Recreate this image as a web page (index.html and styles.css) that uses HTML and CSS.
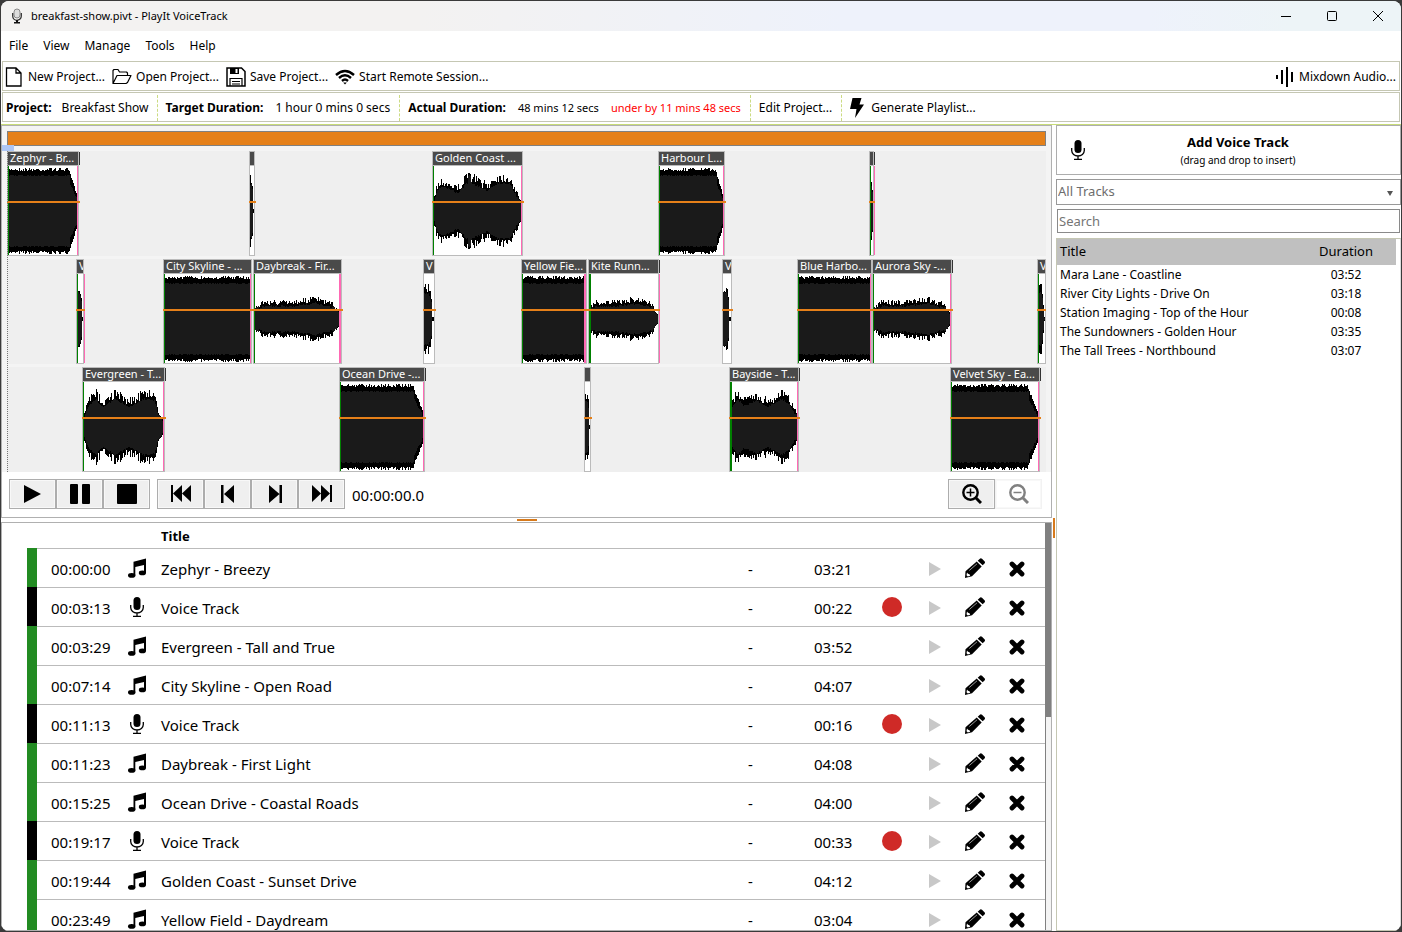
FILE: index.html
```html
<!DOCTYPE html>
<html lang="en">
<head>
<meta charset="utf-8">
<title>breakfast-show.pivt - PlayIt VoiceTrack</title>
<link rel="stylesheet" href="styles.css">
</head>
<body>
<svg class="defs" aria-hidden="true">
  <symbol id="mic" viewBox="0 0 20 20">
    <rect x="6.500" y="0" width="7" height="13" rx="3.500"/>
    <path d="M3.700 8v2.500a6.300 5.500 0 0 0 12.600 0V8M10 16v3M6 19.300h8" fill="none" stroke="currentColor" stroke-width="1.300"/>
  </symbol>
  <symbol id="notes" viewBox="0 0 20 20">
    <path d="M6.500 3.800 19 .600v14.400H17V7L8.300 9V17.500H6.500z"/>
    <ellipse cx="4.700" cy="17.400" rx="3.700" ry="2.300"/>
    <ellipse cx="15.400" cy="14.900" rx="3.600" ry="2.300"/>
  </symbol>
  <symbol id="pencil" viewBox="0 0 20 20">
    <path d="M14.600 1q1.200-1.300 2.400-.200l2.500 2.500q1 1.200 0 2.200l-1.800 1.800-5-4.600z"/>
    <path d="M11.700 3.500l5 4.900L7 18.300 0 20l.500-6.700z"/>
    <path d="M4.300 12.500 12 5.800" fill="none" stroke="#bbb" stroke-width=".8"/>
    <path d="M2 14.500l-.5 2.800 1.300 1.200 2.400-.7-.7-1.600-1.500-.4z" fill="#fff"/>
  </symbol>
  <symbol id="cross" viewBox="0 0 16 16">
    <path d="M3 3l10 10M13 3 3 13" fill="none" stroke="currentColor" stroke-width="4.800" stroke-linecap="round"/>
  </symbol>
  <symbol id="tri" viewBox="0 0 12 14"><path d="M0 0 12 7 0 14z"/></symbol>
</svg>
<div class="window">
  <header class="titlebar">
    <svg class="app-icon" viewBox="0 0 10 16"><rect x="2" y="1" width="6" height="9" rx="3" fill="#ddd" stroke="#888"/><path d="M.700 5v3a4.300 4.300 0 0 0 8.600 0V5" fill="none" stroke="#333" stroke-width="1.300"/><path d="M4 12h2v2h2v1.500H2V14h2z" fill="#111"/></svg>
    <span>breakfast-show.pivt - PlayIt VoiceTrack</span>
    <div class="window-buttons">
      <button aria-label="Minimize"><svg viewBox="0 0 12 12"><path d="M1 6.500h10"/></svg></button>
      <button aria-label="Maximize"><svg viewBox="0 0 12 12"><rect x="1.500" y="1.500" width="9" height="9" rx="1"/></svg></button>
      <button aria-label="Close"><svg viewBox="0 0 12 12"><path d="M1 1l10 10M11 1 1 11"/></svg></button>
    </div>
  </header>
  <nav class="menubar">
    <button>File</button><button>View</button><button>Manage</button><button>Tools</button><button>Help</button>
  </nav>
  <div class="toolbar">
    <button><svg class="ico" viewBox="0 0 20 20"><path d="M2.500 1h9.500l5 5v13h-14.500zM12 1v5h5" fill="none" stroke="#000" stroke-width="1.300"/></svg>New Project...</button>
    <button><svg class="ico" viewBox="0 0 20 20"><path d="M1 16.500V3.500l1-1h4l1.500 2.500h7l1 1v2M1 16.500l4-8h14l-3.500 7-1.500 1z" fill="none" stroke="#000" stroke-width="1.200" stroke-linejoin="round"/></svg>Open Project...</button>
    <button><svg class="ico" viewBox="0 0 20 20"><path d="M1 1h14.500l3.500 3.500V19H1z" fill="none" stroke="#000" stroke-width="1.500"/><path d="M4 1h9v6H4z"/><path d="M9.500 2h2v4h-2z" fill="#fff"/><path d="M4 19v-7.500h12V19M6 14.500h8M6 17h8" fill="none" stroke="#000" stroke-width="1.200"/></svg>Save Project...</button>
    <button><svg class="ico" viewBox="0 0 20 20"><path d="M1 8q9-8 18 0M4 11q6-5.500 12 0M7 14q3-2.800 6 0" fill="none" stroke="#000" stroke-width="2.400"/><path d="M8.200 15.500h3.600L10 17.500z"/></svg>Start Remote Session...</button>
    <button class="push"><svg class="ico" viewBox="0 0 20 20"><path d="M1 8h2v4H1zM6 3h2v14H6zM11 0h2v20h-2zM16 5h2v10h-2z"/></svg>Mixdown Audio...</button>
  </div>
  <div class="toolbar info">
    <div class="cell"><b>Project:</b><span>Breakfast Show</span></div>
    <div class="cell"><b>Target Duration:</b><span>1 hour 0 mins 0 secs</span></div>
    <div class="cell"><b>Actual Duration:</b><span class="small">48 mins 12 secs</span><span class="small under">under by 11 mins 48 secs</span></div>
    <button class="cell">Edit Project...</button>
    <button class="cell gen"><svg class="bolt" viewBox="0 0 14 20"><path d="M2.500 0h9L9.500 6.500H14L5 20l1.500-9H0z"/></svg>Generate Playlist...</button>
  </div>
  <main class="body">
    <section class="left">
      <div class="editor">
        <div class="overview"></div>
        <div class="timeline" id="timeline">
          <div class="lane"></div><div class="lane"></div><div class="lane"></div>
          <div class="playhead"></div>
        </div>
        <div class="transport">
          <div class="group">
            <button aria-label="Play"><svg viewBox="0 0 20 20"><path d="M1 1l17 9L1 19z"/></svg></button>
            <button aria-label="Pause"><svg viewBox="0 0 20 20"><path d="M0 1q0-1 1-1h6q1 0 1 1v18q0 1-1 1H1q-1 0-1-1zM12 1q0-1 1-1h6q1 0 1 1v18q0 1-1 1h-6q-1 0-1-1z"/></svg></button>
            <button aria-label="Stop"><svg viewBox="0 0 20 20"><rect width="20" height="20" rx="1"/></svg></button>
          </div>
          <div class="group">
            <button aria-label="First track"><svg viewBox="0 0 20 20"><path d="M0 1h2v17H0zM11 1v17L2 9.500zM20 1v17l-9-8.500z"/></svg></button>
            <button aria-label="Previous track"><svg viewBox="0 0 20 20"><path d="M3 1h2.500v18H3zM16 1v18L6 10z"/></svg></button>
            <button aria-label="Next track"><svg viewBox="0 0 20 20"><path d="M14.500 1H17v18h-2.500zM4 1l10.500 9L4 19z"/></svg></button>
            <button aria-label="Last track"><svg viewBox="0 0 20 20"><path d="M18 1h2v17h-2zM0 1l9 8.500L0 18zM9 1l9 8.500L9 18z"/></svg></button>
          </div>
          <output class="clock">00:00:00.0</output>
          <div class="group push">
            <button aria-label="Zoom in"><svg viewBox="0 0 20 20"><circle cx="8.500" cy="8.500" r="7.200" fill="none" stroke="currentColor" stroke-width="2.400"/><path d="M4.500 8.500h8M8.500 4.500v8" stroke="currentColor" stroke-width="1.500"/><path d="M14 14l5 5" stroke="currentColor" stroke-width="3"/></svg></button>
            <button aria-label="Zoom out" disabled><svg viewBox="0 0 20 20"><circle cx="8.500" cy="8.500" r="7.200" fill="none" stroke="currentColor" stroke-width="2.400"/><path d="M4.500 8.500h8" stroke="currentColor" stroke-width="1.500"/><path d="M14 14l5 5" stroke="currentColor" stroke-width="3"/></svg></button>
          </div>
        </div>
      </div>
      <div class="splitter-h"><i></i></div>
      <div class="playlist">
        <div class="scroll-area">
          <table class="tracks">
            <colgroup><col class="c-mark"><col class="c-time"><col class="c-icon"><col><col class="c-dash"><col class="c-dur"><col class="c-rec"><col class="c-act"><col class="c-act"><col class="c-del"></colgroup>
            <thead><tr><th></th><th></th><th></th><th scope="col">Title</th><th></th><th></th><th></th><th></th><th></th><th></th></tr></thead>
            <tbody id="rows"></tbody>
          </table>
        </div>
        <div class="scrollbar"><i></i></div>
      </div>
    </section>
    <div class="splitter-v"><i></i></div>
    <aside class="side">
      <button class="add-voice"><svg class="ico" viewBox="0 0 20 20"><use href="#mic"/></svg><span><b>Add Voice Track</b><small>(drag and drop to insert)</small></span></button>
      <label class="combo"><select aria-label="Track filter"><option>All Tracks</option></select><svg viewBox="0 0 6 5"><path d="M0 0h6L3 5z"/></svg></label>
      <input class="search" type="text" placeholder="Search" aria-label="Search">
      <div class="library">
        <table>
          <thead><tr><th scope="col">Title</th><th scope="col" class="dur">Duration</th></tr></thead>
          <tbody>
            <tr><td>Mara Lane - Coastline</td><td class="dur">03:52</td></tr>
            <tr><td>River City Lights - Drive On</td><td class="dur">03:18</td></tr>
            <tr><td>Station Imaging - Top of the Hour</td><td class="dur">00:08</td></tr>
            <tr><td>The Sundowners - Golden Hour</td><td class="dur">03:35</td></tr>
            <tr><td>The Tall Trees - Northbound</td><td class="dur">03:07</td></tr>
          </tbody>
        </table>
      </div>
    </aside>
  </main>
</div>
<script src="app.js"></script>
</body>
</html>
```

FILE: styles.css
```css
* { box-sizing: border-box; }
body {
  margin: 0;
  padding: 1px;
  height: 100vh;
  overflow: hidden;
  background: #3a3a3a;
  color: #000;
  font: 12px/16px "Noto Sans", "Open Sans", sans-serif;
}
button, input, select { font: inherit; color: inherit; margin: 0; }
button { background: none; border: 0; padding: 0; white-space: nowrap; }
svg { display: block; flex: none; }
.defs { display: none; }
.push { margin-left: auto; }

.window {
  height: 100%;
  display: flex;
  flex-direction: column;
  background: #fff;
  border-radius: 8px;
  overflow: hidden;
}
.titlebar {
  height: 30px;
  flex: none;
  display: flex;
  align-items: center;
  padding-left: 11px;
  font-size: 11px;
  background: linear-gradient(90deg, #f3f2f1 0 30%, #eef2fb 60% 82%, #edf4f7 92%);
}
.app-icon { width: 10px; height: 16px; margin-right: 9px; }
.window-buttons { display: flex; margin-left: auto; height: 100%; }
.window-buttons button { width: 46px; display: grid; place-items: center; }
.window-buttons svg { width: 12px; height: 12px; fill: none; stroke: #000; stroke-width: 1; }

.menubar { height: 30px; flex: none; display: flex; align-items: center; gap: 15px; padding: 0 8px; }

.toolbar {
  height: 30px;
  flex: none;
  margin: 0 1px 1px;
  display: flex;
  align-items: center;
  gap: 7px;
  padding: 1px 3px 0 1px;
  border: 1px solid #c5c7b3;
}
.toolbar button { display: flex; align-items: center; gap: 4px; }
.ico { width: 20px; height: 20px; }
.info { gap: 0; padding-left: 3px; margin-bottom: 2px; }
.info .cell { height: 26px; display: flex; align-items: center; gap: 12px; padding: 1px 9px 0 8px; border-right: 1px dashed #cbdb82; }
.info .cell:first-child { gap: 10px; padding: 1px 8px 0 0; }
.info .gen { gap: 7px; border: 0; }
.small { font-size: 11px; }
.under { color: #f00; }
.bolt { width: 14px; height: 20px; }

.body { flex: 1; min-height: 0; display: flex; border-top: 1px solid #c8dc78; }
.left { flex: 1; min-width: 0; display: flex; flex-direction: column; }
.editor { flex: none; border: 1px solid #b0b0b0; background: #f4f4f4; }
.overview { height: 15px; margin: 5px 5px 5px; border: 1px solid #808080; background: #e58019; }
.timeline { position: relative; display: grid; gap: 3px; margin: 0 5px; }
.lane { position: relative; height: 105px; background: #efefef; overflow: hidden; }
.playhead { position: absolute; left: 0; top: 0; bottom: 0; border-left: 1px dotted #777; }
.playhead::before { content: ""; position: absolute; left: -6px; top: -6px; width: 12px; height: 6px; background: #adc6f5; }

.clip { position: absolute; top: 0; bottom: 0; border: 1px solid #bbb; background: #fff; }
.clip-name {
  height: 14px;
  overflow-x: clip;
  padding-left: 2px;
  border-bottom: 1px solid #bbb;
  background: #4a4a4a;
  color: #fff;
  font-size: 11px;
  line-height: 12px;
  white-space: nowrap;
}
.clip svg { width: 100%; height: 89px; }
.clip .level { position: absolute; left: -1px; right: -2px; top: 49px; height: 2px; background: #e58019; }
.clip .in, .clip .out { position: absolute; top: 14px; bottom: 0; width: 1px; }
.clip .in { left: 0; background: #008000; }
.clip .out { right: 0; background: #ff69b4; }
.clip .past { right: -2px; }
.clip .wide { width: 2px; }
.clip .tail { position: absolute; right: -2px; top: 0; width: 1px; height: 13px; background: #333; }

.transport { display: flex; align-items: center; gap: 7px; height: 45px; padding: 0 9px 1px 7px; background: #fff; }
.group { display: flex; }
.group button { width: 47px; height: 30px; display: grid; place-items: center; border: 1px solid #adadad; background: #efefef; box-shadow: inset 0 0 0 1px #f8f8f8; }
.group button:disabled { border-color: #f2f2f2; background: #fff; color: #808080; }
.group svg { width: 20px; height: 20px; }
.clock { padding-top: 2px; font-size: 15px; }

.splitter-h { height: 4px; flex: none; display: flex; justify-content: center; align-items: center; }
.splitter-h i { width: 20px; height: 2px; background: #d77a1c; }
.splitter-v { width: 4px; flex: none; display: flex; align-items: center; justify-content: center; }
.splitter-v i { width: 2px; height: 20px; background: #d77a1c; }

.playlist { flex: 1; min-height: 0; display: flex; border: 1px solid #b0b0b0; }
.scroll-area { flex: 1; min-width: 0; overflow: hidden; padding-left: 25px; }
.scrollbar { width: 6px; flex: none; background: #f4f4f4; border-left: 1px solid #808080; }
.scrollbar i { display: block; height: 194px; background: #808080; }
.tracks { width: 100%; table-layout: fixed; border-collapse: separate; border-spacing: 0; font-size: 15px; line-height: 20px; }
.tracks th { height: 26px; padding: 0; text-align: left; font-size: 13px; border-bottom: 1px solid #bbb; }
.tracks th:first-child { border-bottom-color: #228b22; }
.tracks td { height: 39px; padding: 1px 0 0; border-bottom: 1px solid #bbb; white-space: nowrap; }
.tracks .mark { background: #228b22; border-bottom-color: #228b22; }
.tracks .mark.voice { background: #000; }
.tracks .mark.before-voice { border-bottom-color: #000; }
.c-mark { width: 10px; }
.c-time { width: 90px; }
.c-icon { width: 34px; }
.c-dash { width: 66px; }
.c-dur { width: 68px; }
.c-rec { width: 42px; }
.c-act { width: 41px; }
.c-del { width: 39px; }
.tracks .time { padding-left: 14px; }
.tracks .pic { padding: 0; }
.tracks .pic svg { width: 20px; height: 20px; }
.tracks .pic button { display: block; }
.tracks .pic .tri { width: 12px; height: 14px; fill: #c8c8c8; margin: 2px 0 0 5px; }
.tracks .pic .cross { width: 16px; height: 16px; margin: 1px 0 0 3px; }
.tracks .pic .rec { width: 20px; height: 20px; border-radius: 50%; background: #cf2a27; }

.side { width: 345px; flex: none; display: flex; flex-direction: column; gap: 4px; }
.add-voice { height: 50px; display: flex; align-items: center; padding-left: 11px; border: 1px solid #adadad; }
.add-voice span { flex: 1; display: flex; flex-direction: column; padding: 1px 12px 0 0; text-align: center; font-size: 13px; line-height: 18px; }
.add-voice small { font-size: 10px; }
.combo { position: relative; height: 26px; display: flex; border: 1px solid #999; color: #6d6d6d; }
.combo select { flex: 1; appearance: none; border: 0; background: none; padding: 0 0 2px 1px; font-size: 13px; }
.combo svg { position: absolute; right: 7px; top: 11px; width: 6px; height: 5px; fill: #555; }
.search { height: 24px; margin: 0 1px 1px; padding: 0 0 1px 1px; border: 1px solid #8a8a8a; font-size: 13px; }
.search::placeholder { color: #757575; }
.library { flex: 1; border: 1px solid #c5c7b3; border-right-color: #ddd; padding-right: 4px; }
.library table { width: 100%; border-spacing: 0; line-height: 18px; }
.library th { height: 26px; padding: 0 3px 2px; background: #c0c0c0; text-align: left; font-weight: 400; font-size: 13px; }
.library td { height: 19px; padding: 0 3px; }
.library .dur { width: 100px; text-align: center; }
```

FILE: app.js
```js
const SPAN = 1039;

// Envelopes: [position 0..1, half height]
const SHAPES = {
  fade: [[0, 42], [.86, 42], [1, 12]],
  block: [[0, 42], [1, 42]],
  swell: [[0, 10], [.04, 28], [.1, 34], [.27, 25], [.4, 40], [.6, 28], [.72, 38], [.86, 37], [.95, 17], [1, 6]],
  waves: [[0, 12], [.07, 30], [.15, 38], [.25, 27], [.38, 38], [.56, 28], [.76, 38], [.88, 36], [.93, 16], [1, 4]],
  bay: [[0, 22], [.1, 38], [.2, 29], [.38, 36], [.55, 28], [.75, 38], [.86, 32], [1, 10]],
  low: [[0, 12], [.1, 18], [.4, 18], [.7, 22], [.9, 16], [1, 3]],
  voice: [[0, 36], [.4, 35], [.7, 24], [.74, 1], [1, 1]]
};

// lane, start, width, name, shape, in marker (2 = wide), out marker (2 = wide, 3 = past the edge), tail
const CLIPS = [
  [0, 0, 72, "Zephyr - Br...", "fade", 1, 1, 1],
  [0, 242, 6, "", "voice", 0, 0, 0],
  [0, 425, 91, "Golden Coast ...", "swell", 1, 1, 0],
  [0, 651, 67, "Harbour L...", "fade", 1, 1, 0],
  [0, 862, 5, "", "voice", 1, 3, 1],
  [1, 69, 8, "V", "voice", 1, 3, 0],
  [1, 156, 89, "City Skyline - ...", "block", 1, 1, 0],
  [1, 246, 89, "Daybreak - Fir...", "low", 1, 2, 0],
  [1, 416, 12, "V", "voice", 0, 0, 0],
  [1, 514, 66, "Yellow Fie...", "block", 1, 2, 0],
  [1, 581, 71, "Kite Runn...", "low", 2, 3, 1],
  [1, 715, 10, "V", "voice", 0, 0, 0],
  [1, 790, 75, "Blue Harbo...", "block", 1, 1, 0],
  [1, 865, 80, "Aurora Sky -...", "low", 1, 1, 1],
  [1, 1030, 9, "V", "voice", 1, 0, 0],
  [2, 75, 83, "Evergreen - T...", "waves", 1, 1, 1],
  [2, 332, 86, "Ocean Drive -...", "fade", 1, 1, 1],
  [2, 577, 7, "", "voice", 0, 0, 0],
  [2, 722, 70, "Bayside - T...", "bay", 2, 1, 1],
  [2, 943, 90, "Velvet Sky - Ea...", "fade", 1, 1, 1]
];
const OUT_CLASS = { 1: "out", 2: "out wide", 3: "out past" };

function envelope(points, t) {
  for (let i = 1; i < points.length; i++) {
    if (t <= points[i][0]) {
      const [a, b] = [points[i - 1], points[i]];
      return a[1] + (b[1] - a[1]) * (t - a[0]) / (b[0] - a[0]);
    }
  }
  return points[points.length - 1][1];
}

let seed = 7;
function random() {
  seed = (seed * 16807) % 2147483647;
  return seed / 2147483647;
}

function wave(width, shape) {
  let outer = "", inner = "";
  for (let x = 0; x < width; x++) {
    const e = envelope(SHAPES[shape], x / width);
    const jitter = shape === "fade" || shape === "block" ? 3 : e * .28;
    const h = Math.max(1, Math.round(e + 1 - random() * jitter));
    const k = Math.round(Math.min(h, e > 38 ? 35 + random() : e * (e < 15 ? .95 : .76) - random() * 2));
    outer += `M${x} ${45 - h}h1V${45 + h}h-1z`;
    if (k > 0) inner += `M${x} ${45 - k}h1V${45 + k}h-1z`;
  }
  return `<svg viewBox="0 0 ${width} 89" preserveAspectRatio="none" shape-rendering="crispEdges"><path d="${outer}"/><path d="${inner}" fill="#1a1a1a"/></svg>`;
}

const lanes = document.querySelectorAll(".lane");
for (const [lane, start, width, name, shape, cueIn, cueOut, tail] of CLIPS) {
  const clip = document.createElement("div");
  clip.className = "clip";
  clip.style.left = `${start / SPAN * 100}%`;
  clip.style.width = `${width / SPAN * 100}%`;
  clip.innerHTML = `<div class="clip-name">${name}</div>${wave(width - 2, shape)}` +
    (cueIn ? `<i class="in${cueIn > 1 ? " wide" : ""}"></i>` : "") +
    (cueOut ? `<i class="${OUT_CLASS[cueOut]}"></i>` : "") +
    (tail ? `<i class="tail"></i>` : "") + `<i class="level"></i>`;
  lanes[lane].append(clip);
}

const TRACKS = [
  ["00:00:00", "Zephyr - Breezy", "03:21"],
  ["00:03:13", "Voice Track", "00:22"],
  ["00:03:29", "Evergreen - Tall and True", "03:52"],
  ["00:07:14", "City Skyline - Open Road", "04:07"],
  ["00:11:13", "Voice Track", "00:16"],
  ["00:11:23", "Daybreak - First Light", "04:08"],
  ["00:15:25", "Ocean Drive - Coastal Roads", "04:00"],
  ["00:19:17", "Voice Track", "00:33"],
  ["00:19:44", "Golden Coast - Sunset Drive", "04:12"],
  ["00:23:49", "Yellow Field - Daydream", "03:04"]
];
const isVoice = track => track && track[1] === "Voice Track";
document.getElementById("rows").innerHTML = TRACKS.map((track, i) => {
  const voice = isVoice(track);
  const mark = "mark" + (voice ? " voice" : "") + (isVoice(TRACKS[i + 1]) ? " before-voice" : "");
  return `<tr><td class="${mark}"></td><td class="time">${track[0]}</td>
    <td class="pic"><svg><use href="#${voice ? "mic" : "notes"}"/></svg></td>
    <td>${track[1]}</td><td>-</td><td>${track[2]}</td>
    <td class="pic">${voice ? '<button class="rec" aria-label="Record"></button>' : ""}</td>
    <td class="pic"><button aria-label="Play" disabled><svg class="tri"><use href="#tri"/></svg></button></td>
    <td class="pic"><button aria-label="Edit"><svg><use href="#pencil"/></svg></button></td>
    <td class="pic"><button aria-label="Remove"><svg class="cross"><use href="#cross"/></svg></button></td></tr>`;
}).join("");
```
